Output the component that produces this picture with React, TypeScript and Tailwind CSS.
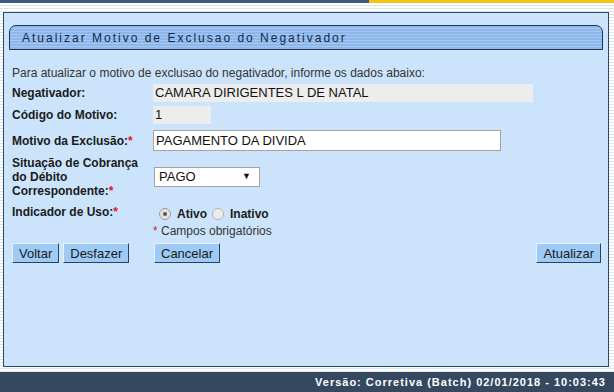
export default function App() {
  const label = "w-[141px] shrink-0 font-bold text-[12px] text-[#1a1a1a]";
  const btn =
    "h-[20px] px-[6px] bg-[#9dcbf6] border border-t-[#e4f1ff] border-l-[#e4f1ff] border-b-[#2c415a] border-r-[#2c415a] text-[13px] leading-none text-[#1a1a1a] flex items-center";
  const req = <span className="text-[#e0162b]">*</span>;

  return (
    <div className="w-[614px] h-[392px] flex flex-col overflow-hidden bg-[repeating-linear-gradient(to_bottom,#ffffff_0px,#ffffff_2px,#dde6ee_2px,#dde6ee_3px)] font-['Liberation_Sans',Arial,sans-serif]">
      {/* top strip */}
      <div className="flex h-[3px] shrink-0">
        <div className="w-[369px] bg-[#3b5b82]" />
        <div className="flex-1 bg-[#f5c416]" />
      </div>

      {/* main panel */}
      <div className="mt-[9px] ml-[3px] w-[606px] h-[355px] shrink-0 border border-[#2b4866] bg-[#cce4fb] px-[5px] pt-[12px] flex flex-col">
        <div className="h-[25px] shrink-0 border border-[#1e3553] rounded-t-[7px] bg-[repeating-linear-gradient(to_bottom,#8db7ea_0px,#8db7ea_2px,#a6c8f1_2px,#a6c8f1_3px)] pl-[12px] flex items-center text-[12px] tracking-[2px] text-[#13284a]">
          Atualizar Motivo de Exclusao do Negativador
        </div>

        <div className="pl-[3px] pr-[2px] flex flex-col text-[12px] text-[#333]">
          <div className="mt-[16px] h-[14px] flex items-center">
            Para atualizar o motivo de exclusao do negativador, informe os dados abaixo:
          </div>

          <div className="mt-[4px] flex items-center h-[18px]">
            <div className={label}>Negativador:</div>
            <div className="w-[380px] h-[18px] bg-[#ededed] pl-[2px] flex items-center text-[13px] text-[#111]">
              CAMARA DIRIGENTES L DE NATAL
            </div>
          </div>

          <div className="mt-[4px] flex items-center h-[18px]">
            <div className={label}>Código do Motivo:</div>
            <div className="w-[58px] h-[18px] bg-[#ededed] pl-[2px] flex items-center text-[13px] text-[#111]">
              1
            </div>
          </div>

          <div className="mt-[6px] flex items-center h-[21px]">
            <div className={label}>Motivo da Exclusão:{req}</div>
            <div className="w-[348px] h-[21px] bg-white border border-[#a3a3a3] pl-[2px] flex items-center text-[13px] text-[#111]">
              PAGAMENTO DA DIVIDA
            </div>
          </div>

          <div className="mt-[5px] flex items-center">
            <div className={label + " leading-[14px]"}>
              Situação de Cobrança
              <br />
              do Débito
              <br />
              Correspondente:{req}
            </div>
            <div className="ml-[1px] w-[106px] h-[20px] bg-white border border-[#a3a3a3] pl-[4px] pr-[8px] flex items-center justify-between text-[13px] text-[#111]">
              <span>PAGO</span>
              <span className="text-[9px]">▼</span>
            </div>
          </div>

          <div className="mt-[7px] flex items-start">
            <div className={label + " leading-[14px]"}>Indicador de Uso:{req}</div>
            <div className="flex items-center ml-[6px] text-[12px] font-bold text-[#1a1a1a]">
              <span className="w-[12px] h-[12px] rounded-full border border-[#9b9b9b] bg-[#e2e2e2] flex items-center justify-center">
                <span className="w-[4px] h-[4px] rounded-full bg-[#555]" />
              </span>
              <span className="ml-[6px]">Ativo</span>
              <span className="ml-[5px] w-[12px] h-[12px] rounded-full border border-[#b5b5b5] bg-[#ececec]" />
              <span className="ml-[6px]">Inativo</span>
            </div>
          </div>

          <div className="mt-[1px] pl-[141px] h-[14px] flex items-center text-[12px] text-[#333]">
            {req}&nbsp;Campos obrigatórios
          </div>

          <div className="mt-[5px] flex items-center">
            <div className="w-[141px] flex gap-[4px]">
              <button className={btn}>Voltar</button>
              <button className={btn}>Desfazer</button>
            </div>
            <button className={btn + " ml-[1px]"}>Cancelar</button>
            <div className="flex-1" />
            <button className={btn}>Atualizar</button>
          </div>
        </div>
      </div>

      <div className="flex-1" />

      {/* footer */}
      <div className="h-[20px] shrink-0 bg-[#34495f] flex items-center justify-end pr-[8px] text-[11px] font-bold tracking-[1px] text-white">
        Versão: Corretiva (Batch) 02/01/2018 - 10:03:43
      </div>
    </div>
  );
}
